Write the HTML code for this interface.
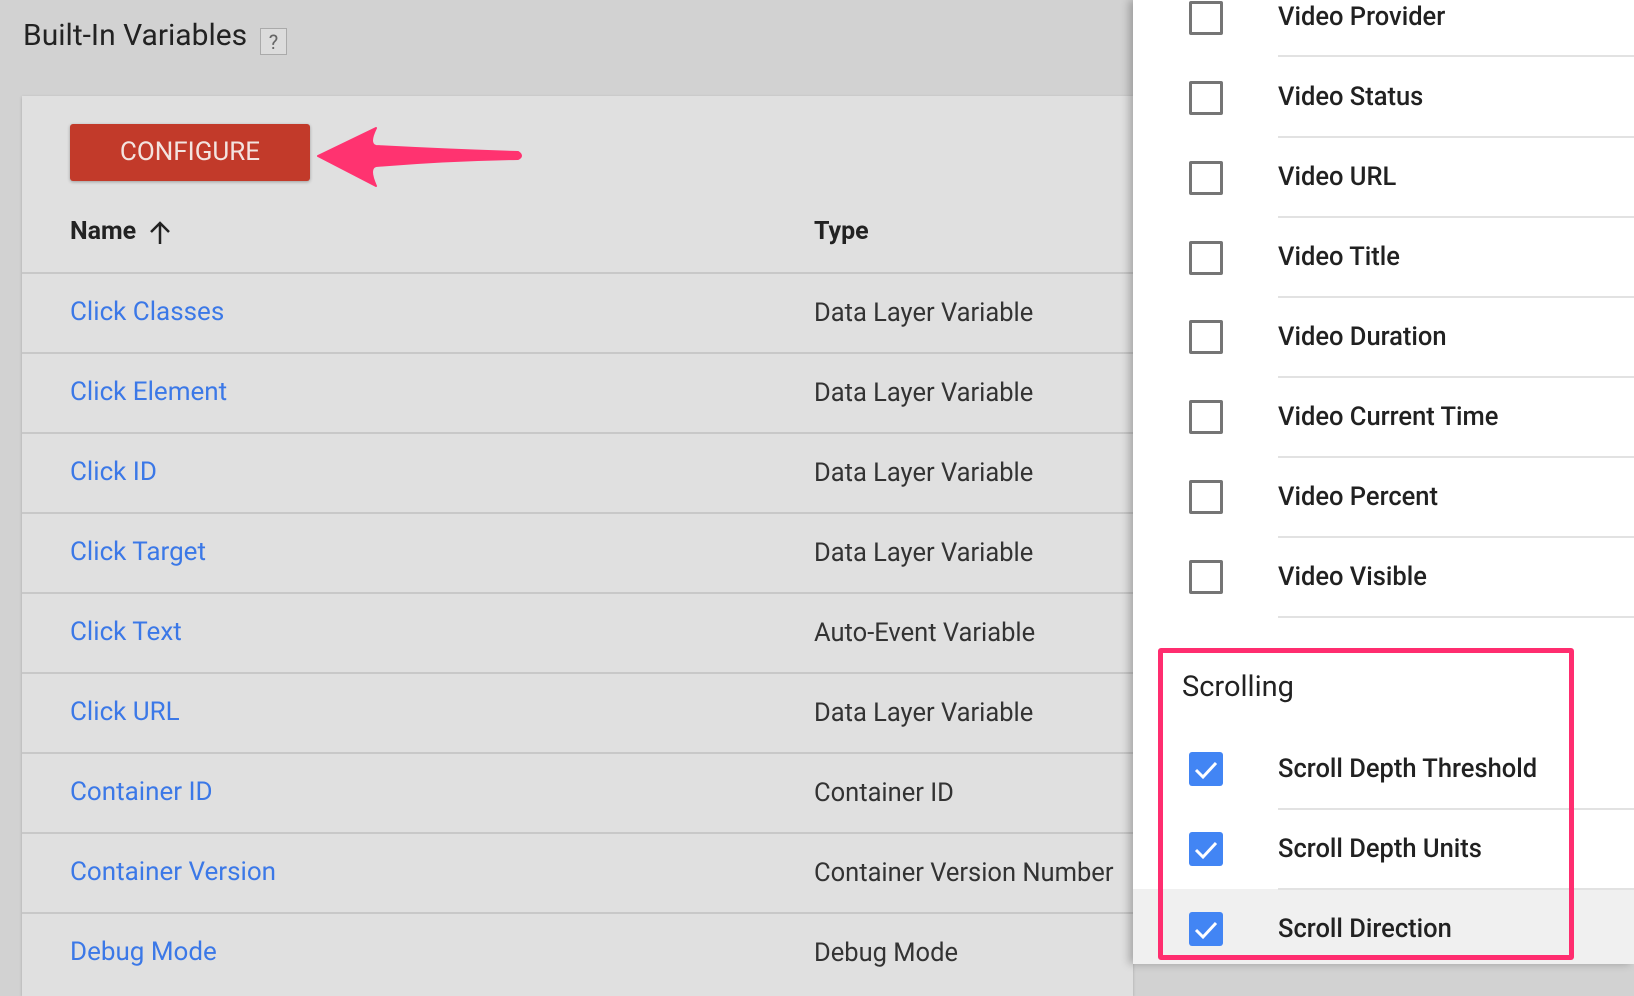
<!DOCTYPE html>
<html><head><style>
*{margin:0;padding:0;box-sizing:border-box}
body{width:1634px;height:964px;overflow:hidden;background:#d2d2d2;font-family:"Roboto","Liberation Sans",sans-serif;position:relative}
.a{position:absolute;white-space:nowrap}
.title{left:23px;top:18px;font-size:30px;color:#222}
.q{left:260px;top:28px;width:27px;height:27px;border:1px solid #aaa;background:#dcdcdc;color:#666;font-size:20px;text-align:center;line-height:27px}
.card{left:22px;top:96px;width:1111px;height:900px;background:#e0e0e0;box-shadow:0 1px 3px rgba(0,0,0,.2)}
.btn{left:70px;top:124px;width:240px;height:57px;background:#c23a2a;border-radius:3px;color:#f3e4e0;font-size:26px;text-align:center;line-height:57px;box-shadow:0 1px 3px rgba(0,0,0,.3)}
.hd{font-size:25px;font-weight:bold;color:#222;top:217px}
.line{height:2px;background:#c8c8c8;left:22px;width:1111px}
.lk{left:70px;font-size:26px;color:#3b78e7}
.ty{left:814px;font-size:25.5px;color:#333}
.panel{left:1133px;top:0;width:501px;height:964px;background:#fff;box-shadow:-4px 0 8px rgba(0,0,0,.25)}
.cb{left:1189px;width:34px;height:34px;border:3px solid #757575;border-radius:2px;background:#fff}
.cb.on{border:none;background:#4285f4;border-radius:3px}
.lb{left:1278px;font-size:25.5px;font-weight:500;color:#212121}
.pl{left:1278px;width:356px;height:2px;background:#e2e2e2}
</style></head><body>
<div class="a title">Built-In Variables</div>
<div class="a q">?</div>
<div class="a card"></div>
<div class="a btn">CONFIGURE</div>
<svg class="a" style="left:310px;top:126px" width="220" height="62" viewBox="0 0 220 62">
<path d="M8 30 L66 2 Q58 18 66 20 Q140 24 208 26 Q214 30 208 33 Q140 34 66 40 Q58 42 66 60 Z" fill="#ff3370" stroke="#ff3370" stroke-width="2" stroke-linejoin="round"/></svg>
<div class="a hd" style="left:70px">Name</div>
<svg class="a" style="left:148px;top:220px" width="24" height="26"><path d="M12 24 V3 M3 12 L12 3 L21 12" stroke="#222" stroke-width="2.5" fill="none"/></svg>
<div class="a hd" style="left:814px">Type</div>
<div class="a line" style="top:272px"></div>
<div class="a line" style="top:352px"></div>
<div class="a line" style="top:432px"></div>
<div class="a line" style="top:512px"></div>
<div class="a line" style="top:592px"></div>
<div class="a line" style="top:672px"></div>
<div class="a line" style="top:752px"></div>
<div class="a line" style="top:832px"></div>
<div class="a line" style="top:912px"></div>
<div class="a lk" style="top:297px">Click Classes</div><div class="a ty" style="top:298px">Data Layer Variable</div>
<div class="a lk" style="top:377px">Click Element</div><div class="a ty" style="top:378px">Data Layer Variable</div>
<div class="a lk" style="top:457px">Click ID</div><div class="a ty" style="top:458px">Data Layer Variable</div>
<div class="a lk" style="top:537px">Click Target</div><div class="a ty" style="top:538px">Data Layer Variable</div>
<div class="a lk" style="top:617px">Click Text</div><div class="a ty" style="top:618px">Auto-Event Variable</div>
<div class="a lk" style="top:697px">Click URL</div><div class="a ty" style="top:698px">Data Layer Variable</div>
<div class="a lk" style="top:777px">Container ID</div><div class="a ty" style="top:778px">Container ID</div>
<div class="a lk" style="top:857px">Container Version</div><div class="a ty" style="top:858px">Container Version Number</div>
<div class="a lk" style="top:937px">Debug Mode</div><div class="a ty" style="top:938px">Debug Mode</div>
<div class="a panel"></div>
<div class="a" style="left:1133px;top:889px;width:501px;height:75px;background:#f0f0f0"></div>
<div class="a cb" style="top:1px"></div><div class="a lb" style="top:2px">Video Provider</div><div class="a pl" style="top:55px"></div>
<div class="a cb" style="top:81px"></div><div class="a lb" style="top:82px">Video Status</div><div class="a pl" style="top:136px"></div>
<div class="a cb" style="top:161px"></div><div class="a lb" style="top:162px">Video URL</div><div class="a pl" style="top:216px"></div>
<div class="a cb" style="top:241px"></div><div class="a lb" style="top:242px">Video Title</div><div class="a pl" style="top:296px"></div>
<div class="a cb" style="top:320px"></div><div class="a lb" style="top:322px">Video Duration</div><div class="a pl" style="top:376px"></div>
<div class="a cb" style="top:400px"></div><div class="a lb" style="top:402px">Video Current Time</div><div class="a pl" style="top:456px"></div>
<div class="a cb" style="top:480px"></div><div class="a lb" style="top:482px">Video Percent</div><div class="a pl" style="top:536px"></div>
<div class="a cb" style="top:560px"></div><div class="a lb" style="top:562px">Video Visible</div><div class="a pl" style="top:616px"></div>
<div class="a" style="left:1182px;top:670px;font-size:29px;color:#222">Scrolling</div>
<div class="a cb on" style="top:752px"><svg width="34" height="34"><path d="M7 18 L14 25 L27 11" stroke="#fff" stroke-width="3" fill="none"/></svg></div>
<div class="a lb" style="top:754px">Scroll Depth Threshold</div><div class="a pl" style="top:808px"></div>
<div class="a cb on" style="top:832px"><svg width="34" height="34"><path d="M7 18 L14 25 L27 11" stroke="#fff" stroke-width="3" fill="none"/></svg></div>
<div class="a lb" style="top:834px">Scroll Depth Units</div><div class="a pl" style="top:888px"></div>
<div class="a cb on" style="top:912px"><svg width="34" height="34"><path d="M7 18 L14 25 L27 11" stroke="#fff" stroke-width="3" fill="none"/></svg></div>
<div class="a lb" style="top:914px">Scroll Direction</div>
<div class="a" style="left:1158px;top:648px;width:416px;height:312px;border:5px solid #ff2d6f;border-radius:3px"></div>
</body></html>
